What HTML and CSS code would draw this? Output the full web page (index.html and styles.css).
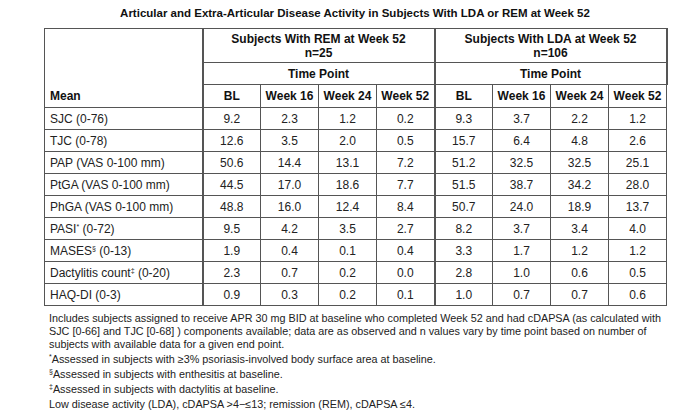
FILE: index.html
```html
<!DOCTYPE html>
<html>
<head>
<meta charset="utf-8">
<link rel="stylesheet" href="styles.css">
</head>
<body>
<div class="page">
  <h1 class="title">Articular and Extra-Articular Disease Activity in Subjects With LDA or REM at Week 52</h1>
  <table class="data">
    <colgroup>
      <col class="c-label">
      <col class="c-num"><col class="c-num"><col class="c-num"><col class="c-num">
      <col class="c-num"><col class="c-num"><col class="c-num"><col class="c-num">
    </colgroup>
    <thead>
      <tr class="r-group">
        <th class="mean" rowspan="3">Mean</th>
        <th class="grp" colspan="4">Subjects With REM at Week 52<br>n=25</th>
        <th class="grp" colspan="4">Subjects With LDA at Week 52<br>n=106</th>
      </tr>
      <tr class="r-tp">
        <th class="grp" colspan="4">Time Point</th>
        <th class="grp" colspan="4">Time Point</th>
      </tr>
      <tr class="r-wk">
        <th class="gs">BL</th><th>Week 16</th><th>Week 24</th><th>Week 52</th>
        <th class="gs">BL</th><th>Week 16</th><th>Week 24</th><th>Week 52</th>
      </tr>
    </thead>
    <tbody>
      <tr><td class="lbl">SJC (0-76)</td><td class="gs">9.2</td><td>2.3</td><td>1.2</td><td>0.2</td><td class="gs">9.3</td><td>3.7</td><td>2.2</td><td>1.2</td></tr>
      <tr><td class="lbl">TJC (0-78)</td><td class="gs">12.6</td><td>3.5</td><td>2.0</td><td>0.5</td><td class="gs">15.7</td><td>6.4</td><td>4.8</td><td>2.6</td></tr>
      <tr><td class="lbl">PAP (VAS 0-100 mm)</td><td class="gs">50.6</td><td>14.4</td><td>13.1</td><td>7.2</td><td class="gs">51.2</td><td>32.5</td><td>32.5</td><td>25.1</td></tr>
      <tr><td class="lbl">PtGA (VAS 0-100 mm)</td><td class="gs">44.5</td><td>17.0</td><td>18.6</td><td>7.7</td><td class="gs">51.5</td><td>38.7</td><td>34.2</td><td>28.0</td></tr>
      <tr><td class="lbl">PhGA (VAS 0-100 mm)</td><td class="gs">48.8</td><td>16.0</td><td>12.4</td><td>8.4</td><td class="gs">50.7</td><td>24.0</td><td>18.9</td><td>13.7</td></tr>
      <tr><td class="lbl">PASI<sup>*</sup> (0-72)</td><td class="gs">9.5</td><td>4.2</td><td>3.5</td><td>2.7</td><td class="gs">8.2</td><td>3.7</td><td>3.4</td><td>4.0</td></tr>
      <tr><td class="lbl">MASES<sup>§</sup> (0-13)</td><td class="gs">1.9</td><td>0.4</td><td>0.1</td><td>0.4</td><td class="gs">3.3</td><td>1.7</td><td>1.2</td><td>1.2</td></tr>
      <tr><td class="lbl">Dactylitis count<sup>‡</sup> (0-20)</td><td class="gs">2.3</td><td>0.7</td><td>0.2</td><td>0.0</td><td class="gs">2.8</td><td>1.0</td><td>0.6</td><td>0.5</td></tr>
      <tr><td class="lbl">HAQ-DI (0-3)</td><td class="gs">0.9</td><td>0.3</td><td>0.2</td><td>0.1</td><td class="gs">1.0</td><td>0.7</td><td>0.7</td><td>0.6</td></tr>
    </tbody>
  </table>
  <div class="notes">
    <p>Includes subjects assigned to receive APR 30 mg BID at baseline who completed Week 52 and had cDAPSA (as calculated with<br>SJC [0-66] and TJC [0-68] ) components available; data are as observed and n values vary by time point based on number of<br>subjects with available data for a given end point.</p>
    <p><sup>*</sup>Assessed in subjects with ≥3% psoriasis-involved body surface area at baseline.</p>
    <p><sup>§</sup>Assessed in subjects with enthesitis at baseline.</p>
    <p><sup>‡</sup>Assessed in subjects with dactylitis at baseline.</p>
    <p>Low disease activity (LDA), cDAPSA &gt;4−≤13; remission (REM), cDAPSA ≤4.</p>
  </div>
</div>
</body>
</html>
```

FILE: styles.css
```css
html, body {
  margin: 0;
  padding: 0;
  background: #ffffff;
}
body {
  font-family: "Liberation Sans", Arial, sans-serif;
  color: #1a1a1a;
}
.page {
  width: 622px;
  padding: 6px 0 0 44px;
}
.title {
  margin: 0 0 8px 0;
  font-size: 11.5px;
  line-height: 14px;
  font-weight: bold;
  text-align: center;
  color: #111;
}
.data {
  width: 622px;
  table-layout: fixed;
  border-collapse: collapse;
  font-size: 12px;
  border: 1px solid #555;
}
.c-label { width: 158px; }
.c-num { width: 58px; }
.data th, .data td {
  border: 1px solid #555;
  padding: 0;
  text-align: center;
}
.data th {
  font-weight: bold;
  font-size: 12px;
  color: #111;
}
.r-group th { height: 33px; line-height: 14px; }
.r-tp th { height: 21px; }
.r-wk th { height: 22px; }
.data th.mean {
  text-align: left;
  vertical-align: bottom;
  padding: 0 0 4px 5px;
  border-right: 2px solid #555;
}
.data th.grp { border-right: 2px solid #555; }
.data .gs { border-left: 2px solid #555; }
.data td { height: 21px; line-height: 14px; color: #222; }
.data td.lbl {
  text-align: left;
  padding-left: 5px;
  border-right: 2px solid #555;
}
sup {
  font-size: 7px;
  line-height: 0;
  vertical-align: 4px;
}
.notes {
  padding: 6px 0 0 5px;
  font-size: 10.8px;
  line-height: 13px;
  color: #222;
  white-space: nowrap;
}
.notes p {
  margin: 0 0 2px 0;
}
```
